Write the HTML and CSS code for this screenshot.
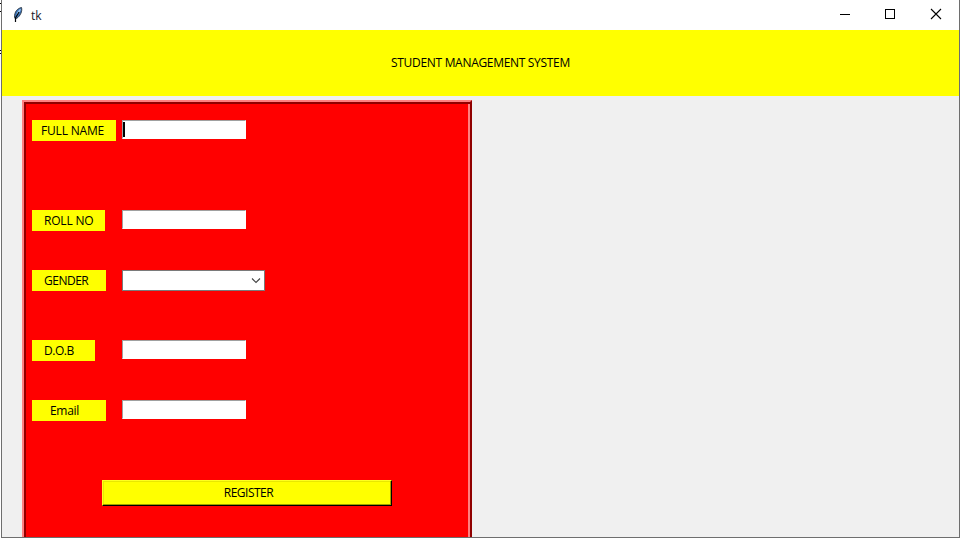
FILE: index.html
```
<!DOCTYPE html>
<html lang="en">
<head>
<meta charset="utf-8">
<title>tk</title>
<link rel="stylesheet" href="styles.css">
</head>
<body>
<div class="desktop">
  <svg class="backdrop" width="2" height="60" shape-rendering="crispEdges"><path d="M0 3.5h2M0 11.5h2M0 50.5h2M0 53.5h2" stroke="#000"/></svg>
  <main class="window">
    <header class="titlebar">
      <svg class="feather" width="12" height="18" viewBox="0 0 12 18"><path d="M2.500 11C2.500 6 5 2.500 9.500 1.500C10.500 5 8.500 10 4.500 12.500L3 12.500Z" fill="#3c74b8" stroke="#2a3440" stroke-width=".9"/><path d="M4.500 9C5 6 7 3.500 8.800 2.800C8.800 5 7 7.500 4.500 9Z" fill="#a4cdf4"/><path d="M7 6L3.500 12L3.500 16" fill="none" stroke="#05080c" stroke-width="1.200"/></svg>
      <span class="title">tk</span>
      <nav class="controls">
        <svg width="45" height="30" shape-rendering="crispEdges"><path d="M16 14.500h10" stroke="#000"/></svg>
        <svg width="45" height="30" shape-rendering="crispEdges"><rect x="16.500" y="9.500" width="9" height="9" fill="none" stroke="#000"/></svg>
        <svg width="45" height="30"><path d="M17 9L27 19M27 9L17 19" stroke="#000" stroke-width="1.100"/></svg>
      </nav>
    </header>
    <h1 class="banner"><span class="banner-text">STUDENT MANAGEMENT SYSTEM</span></h1>
    <section class="content">
      <form class="panel">
        <div class="row full-name"><div class="label"><span>FULL NAME</span></div><div class="entry"><i class="caret"></i></div></div>
        <div class="row roll"><div class="label"><span>ROLL NO</span></div><div class="entry"></div></div>
        <div class="row gender"><div class="label"><span>GENDER</span></div><div class="combo"><svg width="10" height="7" viewBox="0 0 10 7"><path d="M1 1.500L5 5.500L9 1.500" fill="none" stroke="#444" stroke-width="1.100"/></svg></div></div>
        <div class="row dob"><div class="label"><span>D.O.B</span></div><div class="entry"></div></div>
        <div class="row email"><div class="label"><span>Email</span></div><div class="entry"></div></div>
        <button class="register" type="button"><span>REGISTER</span></button>
      </form>
    </section>
  </main>
</div>
</body>
</html>
```
FILE: styles.css
```
* { box-sizing: border-box; }
body { margin: 0; background: #fff; color: #000; font: 12px/16px "Open Sans", "Noto Sans", sans-serif; overflow: hidden; }
.desktop { width: 960px; height: 539px; padding-left: 1px; position: relative; }
.backdrop { position: absolute; left: 0; top: 0; width: 1px; }
.window { height: 538px; border: solid #6e6e6e; border-width: 0 1px 1px; background: #f0f0f0; overflow: hidden; }
.titlebar { display: flex; height: 30px; align-items: center; background: #fff; padding-left: 10px; }
.feather { display: block; margin-top: -1px; }
.title { margin-left: 7px; padding-top: 1px; color: #201828; }
.controls { display: flex; margin-left: auto; }
.controls svg { display: block; }
.banner { margin: 0; height: 66px; background: #ff0; display: flex; align-items: center; justify-content: center; font: inherit; }
.banner-text { letter-spacing: -0.310px; white-space: nowrap; }
.content { height: 441px; padding: 4px 0 0 20px; }
.panel { width: 450px; height: 480px; background: #f00; border: 2px solid; border-color: #ff8080 #900000 #900000 #ff8080; box-shadow: inset 2px 2px #900000, inset -2px 0 #ff8080; padding: 18px 0 0 8px; }
.row { display: flex; height: 60px; align-items: flex-start; }
.label { height: 21px; width: 74px; padding: 3px 0 0 12px; margin-right: 16px; background: #ff0; line-height: 16px; white-space: nowrap; }
.label span { letter-spacing: -0.300px; }
.full-name { height: 90px; }
.full-name .label { width: 84px; padding-left: 9px; margin-right: 6px; }
.full-name .label span { letter-spacing: -0.180px; }
.roll .label { width: 73px; margin-right: 17px; }
.roll .label span { letter-spacing: -0.200px; }
.gender { height: 70px; }
.gender .label span { letter-spacing: -0.500px; }
.dob .label { width: 63px; margin-right: 27px; }
.dob .label span { letter-spacing: -0.450px; }
.email { height: 80px; }
.email .label { padding-left: 18px; }
.entry { width: 124px; height: 19px; background: #fff; border: solid; border-width: 1px; border-color: #a0a0a0 #fff #fff #a0a0a0; }
.caret { display: block; width: 2px; height: 15px; margin-top: 1px; background: #000; }
.combo { width: 143px; height: 21px; border: 1px solid #7a7a7a; background: #fff; display: flex; align-items: center; justify-content: flex-end; padding-right: 3px; }
.register { display: block; width: 290px; height: 26px; margin: 0 0 0 70px; padding: 0 0 0 3px; font: inherit; line-height: 22px; color: #000; background: #ff0; border: 1px solid; border-color: #ffff20 #000 #000 #ffff20; box-shadow: inset -1px -1px #a0a000, inset 1px 1px #e8e800; border-radius: 0; }
.register span { letter-spacing: -0.500px; }
```
